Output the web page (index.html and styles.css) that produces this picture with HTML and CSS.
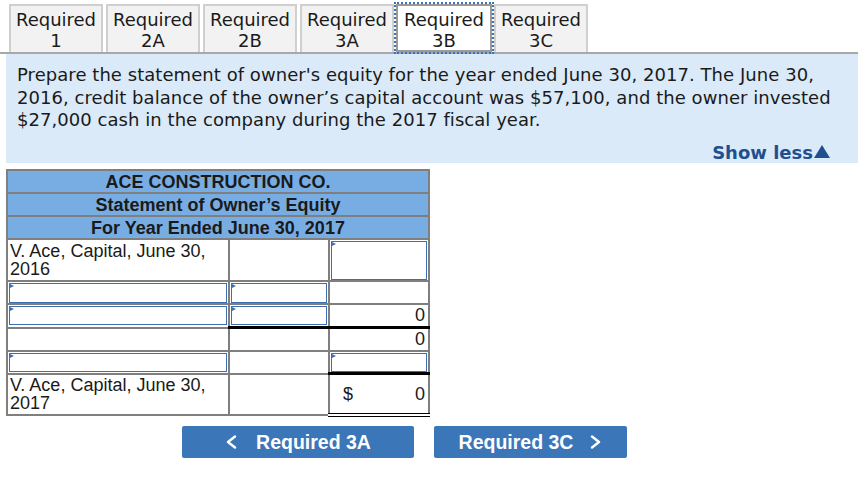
FILE: index.html
```html
<!DOCTYPE html>
<html>
<head>
<meta charset="utf-8">
<link rel="stylesheet" href="styles.css">
</head>
<body>
<div class="tabs">
  <div class="tab">Required<br>1</div>
  <div class="tab">Required<br>2A</div>
  <div class="tab">Required<br>2B</div>
  <div class="tab">Required<br>3A</div>
  <div class="tab active">Required<br>3B</div>
  <div class="tab">Required<br>3C</div>
</div>
<div class="panel">
  <p class="question">Prepare the statement of owner's equity for the year ended June 30, 2017. The June 30, 2016, credit balance of the owner’s capital account was $57,100, and the owner invested $27,000 cash in the company during the 2017 fiscal year.</p>
  <div class="showless">Show less<span class="tri"></span></div>
</div>
<table class="stmt">
  <colgroup><col class="c1"><col class="c2"><col class="c3"></colgroup>
  <tr class="hd"><td colspan="3">ACE CONSTRUCTION CO.</td></tr>
  <tr class="hd"><td colspan="3">Statement of Owner’s Equity</td></tr>
  <tr class="hd"><td colspan="3">For Year Ended June 30, 2017</td></tr>
  <tr class="tall">
    <td class="lbl">V. Ace, Capital, June 30, 2016</td>
    <td></td>
    <td class="inp"><div class="box"></div></td>
  </tr>
  <tr class="short">
    <td class="inp"><div class="box"></div></td>
    <td class="inp"><div class="box"></div></td>
    <td></td>
  </tr>
  <tr class="short ulrow">
    <td class="inp"><div class="box"></div></td>
    <td class="inp ul"><div class="box"></div></td>
    <td class="num ul">0</td>
  </tr>
  <tr class="short">
    <td></td>
    <td></td>
    <td class="num">0</td>
  </tr>
  <tr class="short ulrow">
    <td class="inp"><div class="box"></div></td>
    <td></td>
    <td class="inp ul"><div class="box"></div></td>
  </tr>
  <tr class="tall dblrow">
    <td class="lbl">V. Ace, Capital, June 30, 2017</td>
    <td></td>
    <td class="num dbl"><span class="cur">$</span>0</td>
  </tr>
</table>
<div class="nav">
  <div class="btn prev"><svg width="12" height="14" viewBox="0 0 12 14"><polyline points="10,1.5 3,7 10,12.5" fill="none" stroke="#fff" stroke-width="2.4" stroke-linecap="round" stroke-linejoin="round"/></svg><span>Required 3A</span></div>
  <div class="btn next"><span>Required 3C</span><svg width="12" height="14" viewBox="0 0 12 14"><polyline points="2,1.5 9,7 2,12.5" fill="none" stroke="#fff" stroke-width="2.4" stroke-linecap="round" stroke-linejoin="round"/></svg></div>
</div>
</body>
</html>
```
FILE: styles.css
```css
html, body {
  margin: 0;
  padding: 0;
  background: #fff;
}
body {
  font-family: "DejaVu Sans", Verdana, sans-serif;
  color: #1a1a1a;
}
.tabs {
  display: flex;
  gap: 3px;
  padding: 4px 0 0 9px;
  width: 849px;
  border-bottom: 2px solid #a8a8a8;
  height: 48px;
  box-sizing: content-box;
}
.tab {
  width: 94px;
  height: 48px;
  box-sizing: border-box;
  border: 2px solid #cfcfcf;
  border-bottom: none;
  background: #f2f2f2;
  text-align: center;
  font-size: 18px;
  line-height: 21px;
  padding-top: 3px;
}
.tab.active {
  background: #fff;
  border-color: #9a9a9a;
  border-bottom: 2px solid #9a9a9a;
  outline: 2px dotted #3b73b9;
  outline-offset: 0;
  width: 96px;
  margin: 0 -1px;
}
.panel {
  margin-left: 6px;
  width: 852px;
  background: #dbeaf8;
  padding: 10px 11px 0 11px;
  box-sizing: border-box;
  height: 109px;
}
.question {
  margin: 0;
  font-size: 18px;
  line-height: 22.5px;
  letter-spacing: 0.05px;
  color: #1a1a1a;
}
.showless {
  display: flex;
  justify-content: flex-end;
  align-items: center;
  padding-right: 17px;
  margin-top: 10px;
  font-weight: bold;
  font-size: 18px;
  line-height: 21px;
  color: #1f4f8f;
}
.tri {
  display: inline-block;
  width: 0;
  height: 0;
  border-left: 8.5px solid transparent;
  border-right: 8.5px solid transparent;
  border-bottom: 13px solid #1f4f8f;
  margin-left: 1px;
  margin-top: -1px;
}
.stmt {
  margin: 6px 0 0 6px;
  border-collapse: collapse;
  border: 2px solid #7f7f7f;
  font-family: "Liberation Sans", Arial, sans-serif;
  font-size: 18px;
  color: #1a1a1a;
  table-layout: fixed;
  width: 422px;
}
.c1 { width: 222px; }
.c2 { width: 100px; }
.c3 { width: 100px; }
.stmt td {
  border: 2px solid #7f7f7f;
  padding: 0;
  background: #fff;
}
.hd td {
  background: #78ade3;
  text-align: center;
  font-weight: bold;
  font-size: 18px;
  height: 21px;
  line-height: 20px;
}
.tall td {
  height: 40px;
}
.short td {
  height: 21px;
}
.ulrow td {
  height: 20px;
}
.dblrow td {
  height: 38px;
}
.lbl {
  padding: 0 2px !important;
  line-height: 18px;
  vertical-align: middle;
}
.inp {
  vertical-align: top;
}
.box {
  position: relative;
  margin: 0 1px;
  border: 1.5px solid #3e6fb4;
  box-sizing: border-box;
}
.short .box { height: 20px; margin-top: 1px; }
.tall .box { height: 39px; margin-top: 1px; }
.ulrow .box { height: 19px; }
.box::before {
  content: "";
  position: absolute;
  left: 0;
  top: 0;
  border-left: 4px solid #3e6fb4;
  border-top: 2px solid transparent;
  border-bottom: 2px solid transparent;
}
.num {
  text-align: right;
  padding-right: 3px !important;
  vertical-align: middle;
}
.stmt td.ul {
  border-bottom: 3px solid #000;
}
.stmt td.dbl {
  border-bottom: 4px double #000;
}
.cur {
  float: left;
  margin-left: 13px;
}
.nav {
  display: flex;
  gap: 20px;
  margin: 9px 0 0 182px;
}
.btn {
  height: 32px;
  background: #3a76b8;
  border-radius: 2px;
  color: #fff;
  font-family: "Liberation Sans", Arial, sans-serif;
  font-weight: bold;
  font-size: 19.5px;
  display: flex;
  align-items: center;
  justify-content: center;
  box-sizing: border-box;
}
.btn.prev { width: 232px; gap: 19px; }
.btn.next { width: 193px; gap: 17px; }
```
